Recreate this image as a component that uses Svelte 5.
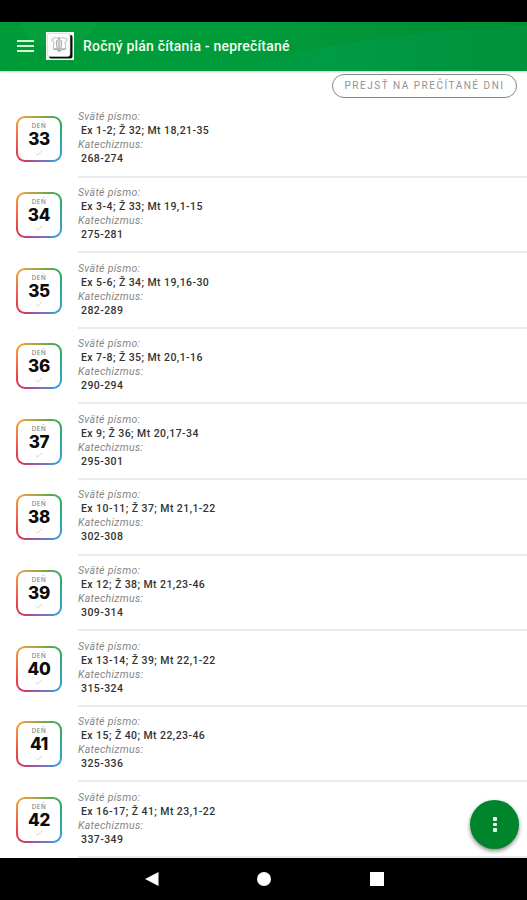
<script>
  const days = [
    { day: 33, bible: 'Ex 1-2; Ž 32; Mt 18,21-35', catechism: '268-274' },
    { day: 34, bible: 'Ex 3-4; Ž 33; Mt 19,1-15', catechism: '275-281' },
    { day: 35, bible: 'Ex 5-6; Ž 34; Mt 19,16-30', catechism: '282-289' },
    { day: 36, bible: 'Ex 7-8; Ž 35; Mt 20,1-16', catechism: '290-294' },
    { day: 37, bible: 'Ex 9; Ž 36; Mt 20,17-34', catechism: '295-301' },
    { day: 38, bible: 'Ex 10-11; Ž 37; Mt 21,1-22', catechism: '302-308' },
    { day: 39, bible: 'Ex 12; Ž 38; Mt 21,23-46', catechism: '309-314' },
    { day: 40, bible: 'Ex 13-14; Ž 39; Mt 22,1-22', catechism: '315-324' },
    { day: 41, bible: 'Ex 15; Ž 40; Mt 22,23-46', catechism: '325-336' },
    { day: 42, bible: 'Ex 16-17; Ž 41; Mt 23,1-22', catechism: '337-349' }
  ];
</script>

<div class="screen">
  <div class="status"></div>
  <header>
    <svg class="waves" viewBox="0 0 527 49" preserveAspectRatio="none" aria-hidden="true">
      <defs>
        <linearGradient id="hill" x1="0" y1="0" x2="1" y2="0">
          <stop offset="0" stop-color="#009c3c" stop-opacity="0" />
          <stop offset="0.4" stop-color="#009c46" />
          <stop offset="1" stop-color="#00913c" />
        </linearGradient>
      </defs>
      <path d="M20 0H99Q92 15 70 24H37Q27 14 20 0Z" fill="#0ca344" opacity=".5" />
      <path d="M180 49Q270 36 300 30Q420 6 527 4V49Z" fill="url(#hill)" />
    </svg>
    <svg class="menu" viewBox="0 0 17 12" aria-hidden="true">
      <path d="M0 1H17M0 6H17M0 11H17" stroke="#d8f5d2" stroke-width="1.9" />
    </svg>
    <svg class="logo" viewBox="0 0 28 28" aria-hidden="true">
      <rect width="28" height="28" fill="#f4fbef" />
      <rect x="3" y="3" width="23.5" height="23.5" rx="2" fill="#080a10" />
      <rect x="1.3" y="1.3" width="22.7" height="23.2" rx="2.5" fill="#fdfdfd" stroke="#c9cdc9" stroke-width=".6" />
      <g fill="none" stroke="#858987" stroke-width=".9">
        <path d="M6 7Q10 4 13 7Q16 4 21 7V9L19 10L20 17Q16 17 13 20Q11 17 7 17L8 10L6 9Z" stroke="#b4b4b4" />
        <path d="M13 5V18M11 8Q10 15 12 17M15 8Q16 15 14 17" />
        <path d="M8 17Q11 16 13 19Q15 16 19 17" />
      </g>
    </svg>
    <h1>Ročný plán čítania - neprečítané</h1>
  </header>

  <main>
    <div class="toolbar"><button class="read">PREJSŤ NA PREČÍTANÉ DNI</button></div>
    {#each days as item}
      <article>
        <div class="badge">
          <span class="den">DEŇ</span>
          <strong>{item.day}</strong>
          <svg viewBox="0 0 8 6" aria-hidden="true"><path d="M.7 3.5L2.5 5L7.2 .7" fill="none" stroke="#cfcfcf" stroke-width=".9" /></svg>
        </div>
        <div class="info">
          <em>Sväté písmo:</em>
          <span class="value">{item.bible}</span>
          <em>Katechizmus:</em>
          <span class="value">{item.catechism}</span>
        </div>
      </article>
    {/each}
    <button class="fab" aria-label="Menu"><i></i><i></i><i></i></button>
  </main>

  <nav>
    <svg viewBox="0 0 14 14"><path d="M0 7L13.5 0V14Z" fill="#fff" /></svg>
    <svg viewBox="0 0 14 14"><circle cx="7" cy="7" r="7" fill="#fff" /></svg>
    <svg viewBox="0 0 14 14"><path d="M0 0H14V14H0Z" fill="#fff" /></svg>
  </nav>
</div>

<style>
  .screen {
    width: 527px;
    height: 900px;
    display: flex;
    flex-direction: column;
    overflow: hidden;
    background: #fff;
    font-family: Roboto, sans-serif;
  }
  .status { height: 22px; flex: none; background: #000; }
  header {
    position: relative;
    z-index: 1;
    height: 49px;
    flex: none;
    box-sizing: border-box;
    display: flex;
    align-items: center;
    padding-left: 17px;
    background: linear-gradient(90deg, #009b39 0%, #009c3b 45%, #009436 75%, #008d32 100%);
    box-shadow: 0 1px 2px #0003;
  }
  .waves { position: absolute; inset: 0; width: 100%; height: 100%; }
  .menu { position: relative; width: 17px; height: 12px; margin-top: -1px; }
  .logo { position: relative; width: 28px; height: 28px; margin: -1px 0 0 12px; }
  h1 {
    position: relative;
    margin: -1px 0 0 9px;
    font-size: 14px;
    line-height: 20px;
    font-weight: 500;
    letter-spacing: .2px;
    color: #eefcec;
    white-space: nowrap;
  }
  main { position: relative; flex: none; height: 787px; }
  .toolbar {
    height: 31px;
    box-sizing: border-box;
    display: flex;
    justify-content: flex-end;
    padding: 3px 10px 0 0;
  }
  .read {
    width: 185px;
    height: 24px;
    box-sizing: border-box;
    padding: 0;
    border: 1.5px solid #858585;
    border-radius: 12px;
    background: #fff;
    color: #929292;
    font: 400 10px/20px Roboto, sans-serif;
    letter-spacing: 1.52px;
    white-space: nowrap;
  }
  article {
    height: 75.6px;
    box-sizing: border-box;
    display: flex;
    align-items: flex-start;
    padding-left: 16px;
  }
  .badge {
    width: 46px;
    height: 46px;
    flex: none;
    box-sizing: border-box;
    margin-top: 14.4px;
    display: flex;
    flex-direction: column;
    align-items: center;
    border: 2px solid transparent;
    border-radius: 9px;
    background:
      linear-gradient(#fff, #fff) padding-box,
      conic-gradient(from 45deg, #35a95b, #2fa3b8 18%, #3b9adc 26%, #8a63b4 38%, #e0304f 50%, #f0604c 62%, #f0a03c 75%, #9ba548 88%, #35a95b) border-box;
  }
  .den { margin-top: 4px; font: 500 6.2px/8px Inter, sans-serif; color: #858585; letter-spacing: .5px; }
  strong { margin-top: 1px; font: 800 17px/16px Inter, sans-serif; color: #0c0c0c; letter-spacing: -.3px; }
  .badge svg { width: 8px; height: 6px; margin-top: 2.5px; }
  .info {
    flex: 1;
    height: 100%;
    box-sizing: border-box;
    margin-left: 16px;
    padding-top: 8.4px;
    border-bottom: 2px solid #ebebeb;
    display: flex;
    flex-direction: column;
    white-space: nowrap;
  }
  em { font-size: 10.5px; line-height: 14px; color: #858585; letter-spacing: .32px; }
  .value { padding-left: 3px; font-size: 10.5px; line-height: 14px; color: #333; font-weight: 500; letter-spacing: .43px; }
  .fab {
    position: absolute;
    right: 8px;
    bottom: 9px;
    width: 49px;
    height: 49px;
    padding: 0;
    border: 0;
    border-radius: 50%;
    background: #00852d;
    box-shadow: 0 2px 4px #0007;
    display: flex;
    flex-direction: column;
    align-items: center;
    justify-content: center;
    gap: 2px;
  }
  .fab i { width: 4px; height: 3.4px; border-radius: 1px; background: #f0faf0; }
  nav {
    position: relative;
    flex: 1;
    display: flex;
    justify-content: center;
    align-items: center;
    gap: 98.5px;
    padding-left: 1px;
    background: #000;
  }
  nav svg { width: 14px; height: 14px; }
</style>
